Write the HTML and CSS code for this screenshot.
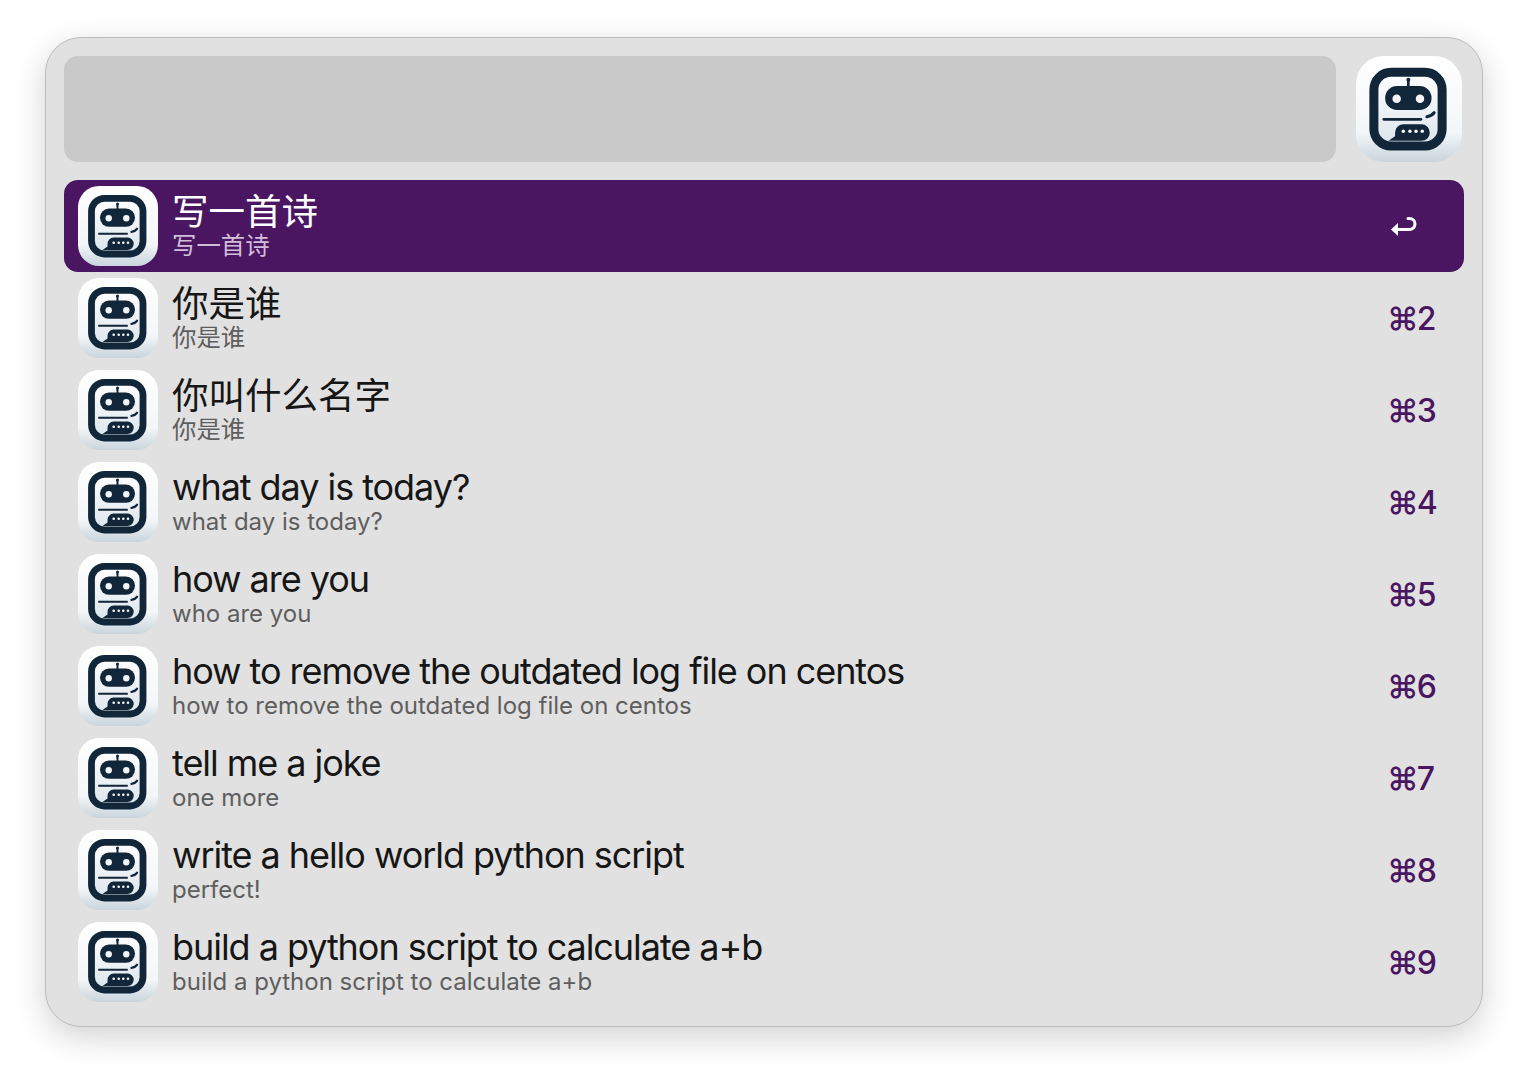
FILE: index.html
```html
<!DOCTYPE html>
<html lang="zh-CN">
<head>
    <meta charset="UTF-8">
    <meta name="viewport" content="width=device-width, initial-scale=1.0">
    <title>Launcher</title>
    <link rel="stylesheet" href="styles.css">
</head>
<body>
    <!-- Icon shared by the header and every row -->
    <svg class="defs" width="0" height="0" aria-hidden="true">
        <defs>
            <linearGradient id="tileFill" x1="0" y1="0" x2="0" y2="1">
                <stop offset="0" stop-color="#ffffff"/>
                <stop offset="0.72" stop-color="#f3f6f8"/>
                <stop offset="1" stop-color="#c9d5dd"/>
            </linearGradient>
            <linearGradient id="screenFill" x1="0" y1="0" x2="0" y2="1">
                <stop offset="0" stop-color="#ffffff"/>
                <stop offset="1" stop-color="#dbe5ec"/>
            </linearGradient>
            <symbol id="botIcon" viewBox="0 0 80 80">
                <rect width="80" height="80" rx="21" fill="url(#tileFill)"/>
                <rect x="13.500" y="12.300" width="51.500" height="55.700" rx="13" fill="url(#screenFill)" stroke="#12263a" stroke-width="6.800"/>
                <path d="M39.500 18v6" stroke="#12263a" stroke-width="2" stroke-linecap="round"/>
                <circle cx="39.500" cy="18" r="1.500" fill="#12263a"/>
                <rect x="22" y="22.600" width="35" height="18.200" rx="9" fill="#12263a"/>
                <circle cx="30.700" cy="32.200" r="3.200" fill="#f4f7f9"/>
                <circle cx="48.300" cy="32.200" r="3.200" fill="#f4f7f9"/>
                <path d="M21 47.800h28" stroke="#12263a" stroke-width="2" stroke-linecap="round"/>
                <path d="M53.500 45.800c2.500-.4 4.500-1.500 5.500-3" fill="none" stroke="#12263a" stroke-width="2.300" stroke-linecap="round"/>
                <path d="M35.500 51.600h14a6.200 6.200 0 0 1 0 12.400H24.500l5-3.500v-2.800a6.200 6.200 0 0 1 6-6.100z" fill="#12263a"/>
                <circle cx="35.700" cy="56.800" r="1.300" fill="#f4f7f9"/>
                <circle cx="40.700" cy="56.800" r="1.300" fill="#f4f7f9"/>
                <circle cx="45.300" cy="56.800" r="1.300" fill="#f4f7f9"/>
                <circle cx="50" cy="56.800" r="1.300" fill="#f4f7f9"/>
            </symbol>
        </defs>
    </svg>

    <div class="panel">
        <div class="search">
            <div class="search-input"></div>
            <svg class="search-icon"><use href="#botIcon"/></svg>
        </div>

        <ul class="list">
            <li class="row selected cjk">
                <svg class="row-icon"><use href="#botIcon"/></svg>
                <div class="row-text">
                    <div class="row-title">写一首诗</div>
                    <div class="row-sub">写一首诗</div>
                </div>
                <svg class="enter" viewBox="0 0 28 24"><path d="M17 4.500h1.500a5.500 5.500 0 0 1 0 11H5" fill="none" stroke="#fff" stroke-width="3" stroke-linecap="round"/><path d="M0 15.500l7-6.500v13z" fill="#fff"/></svg>
            </li>
            <li class="row cjk">
                <svg class="row-icon"><use href="#botIcon"/></svg>
                <div class="row-text">
                    <div class="row-title">你是谁</div>
                    <div class="row-sub">你是谁</div>
                </div>
                <div class="shortcut">⌘2</div>
            </li>
            <li class="row cjk">
                <svg class="row-icon"><use href="#botIcon"/></svg>
                <div class="row-text">
                    <div class="row-title">你叫什么名字</div>
                    <div class="row-sub">你是谁</div>
                </div>
                <div class="shortcut">⌘3</div>
            </li>
            <li class="row">
                <svg class="row-icon"><use href="#botIcon"/></svg>
                <div class="row-text">
                    <div class="row-title">what day is today?</div>
                    <div class="row-sub">what day is today?</div>
                </div>
                <div class="shortcut">⌘4</div>
            </li>
            <li class="row">
                <svg class="row-icon"><use href="#botIcon"/></svg>
                <div class="row-text">
                    <div class="row-title">how are you</div>
                    <div class="row-sub">who are you</div>
                </div>
                <div class="shortcut">⌘5</div>
            </li>
            <li class="row">
                <svg class="row-icon"><use href="#botIcon"/></svg>
                <div class="row-text">
                    <div class="row-title">how to remove the outdated log file on centos</div>
                    <div class="row-sub">how to remove the outdated log file on centos</div>
                </div>
                <div class="shortcut">⌘6</div>
            </li>
            <li class="row">
                <svg class="row-icon"><use href="#botIcon"/></svg>
                <div class="row-text">
                    <div class="row-title">tell me a joke</div>
                    <div class="row-sub">one more</div>
                </div>
                <div class="shortcut">⌘7</div>
            </li>
            <li class="row">
                <svg class="row-icon"><use href="#botIcon"/></svg>
                <div class="row-text">
                    <div class="row-title">write a hello world python script</div>
                    <div class="row-sub">perfect!</div>
                </div>
                <div class="shortcut">⌘8</div>
            </li>
            <li class="row">
                <svg class="row-icon"><use href="#botIcon"/></svg>
                <div class="row-text">
                    <div class="row-title">build a python script to calculate a+b</div>
                    <div class="row-sub">build a python script to calculate a+b</div>
                </div>
                <div class="shortcut">⌘9</div>
            </li>
        </ul>
    </div>
</body>
</html>
```

FILE: styles.css
```css
* {
    box-sizing: border-box;
}
html, body {
    margin: 0;
    padding: 0;
}
body {
    height: 1080px;
    overflow: hidden;
    background-color: #fff;
    padding: 37px 45px 0;
    font-family: Inter, "Noto Sans CJK SC", "DejaVu Sans", sans-serif;
}
.defs {
    position: absolute;
}
.panel {
    width: 1438px;
    height: 990px;
    padding: 18px;
    background-color: #e1e1e1;
    border: 1px solid #bcbcbc;
    border-radius: 36px;
    box-shadow: 0 10px 32px rgba(0, 0, 0, 0.18);
}
.search {
    display: flex;
    gap: 20px;
    height: 106px;
    margin-bottom: 18px;
}
.search-input {
    flex: 1;
    background-color: #c9c9c9;
    border-radius: 14px;
}
.search-icon {
    width: 106px;
    height: 106px;
    margin-right: 2px;
    filter: blur(0.5px);
}
.list {
    list-style: none;
    margin: 0;
    padding: 0;
}
.row {
    display: flex;
    align-items: center;
    height: 92px;
    padding: 0 31px 0 14px;
    border-radius: 14px;
}
.row-icon {
    width: 80px;
    height: 80px;
    flex-shrink: 0;
    filter: blur(0.4px);
}
.row-text {
    flex: 1;
    margin-left: 14px;
}
.row-title {
    font-size: 36px;
    line-height: 38px;
    letter-spacing: -1.050px;
    color: #161616;
}
.row-sub {
    margin-top: 2px;
    font-size: 24px;
    line-height: 28px;
    color: #5e5e5e;
}
.cjk .row-title {
    font-size: 36.500px;
    letter-spacing: 0;
}
.cjk .row-sub {
    margin-top: 0;
    font-size: 24.400px;
}
.shortcut {
    width: 46px;
    padding-top: 1px;
    font-size: 32px;
    font-weight: 500;
    letter-spacing: -2px;
    color: #4a1561;
    white-space: nowrap;
}
.enter {
    width: 28px;
    height: 24px;
    margin-right: 14px;
}
.selected {
    background-color: #4a1561;
}
.selected .row-title {
    color: #fff;
}
.selected .row-sub {
    color: #d2bedb;
}
```
